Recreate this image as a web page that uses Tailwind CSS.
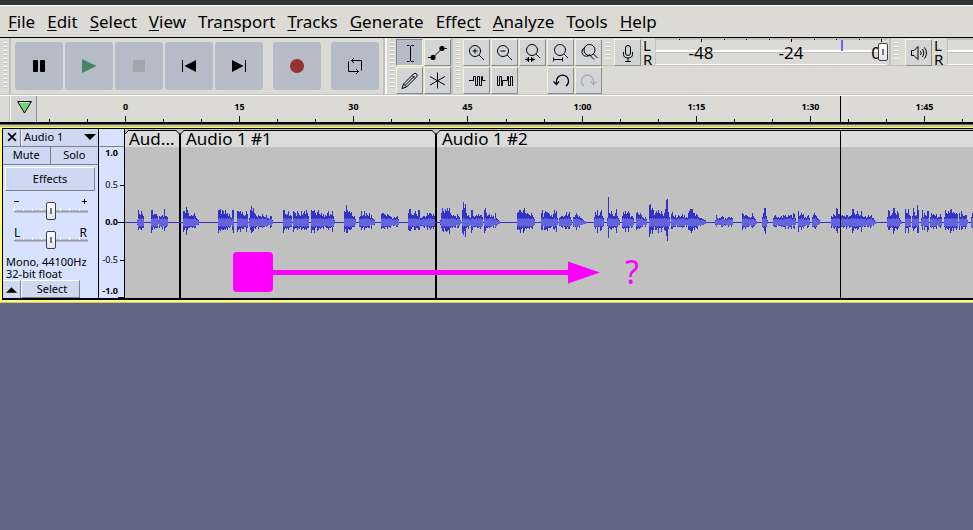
<!DOCTYPE html>
<html lang="en">
<head>
    <meta charset="UTF-8">
    <meta name="viewport" content="width=device-width, initial-scale=1">
    <title>Audio Editor</title>
    <script src="https://cdn.jsdelivr.net/npm/@tailwindcss/browser@4"></script>
</head>
<body class="min-h-screen bg-[#626685] font-['Noto_Sans',sans-serif] text-black overflow-x-hidden">
    <div class="h-[5px] bg-[#30353a]"></div>

    <nav class="flex items-center gap-3 h-8 pl-2 bg-[#dbdad5] border-t border-white text-[17px] leading-6 whitespace-nowrap" aria-label="Main menu">
        <button><span class="underline underline-offset-2 decoration-1">F</span>ile</button>
        <button><span class="underline underline-offset-2 decoration-1">E</span>dit</button>
        <button><span class="underline underline-offset-2 decoration-1">S</span>elect</button>
        <button><span class="underline underline-offset-2 decoration-1">V</span>iew</button>
        <button>Tra<span class="underline underline-offset-2 decoration-1">n</span>sport</button>
        <button><span class="underline underline-offset-2 decoration-1">T</span>racks</button>
        <button><span class="underline underline-offset-2 decoration-1">G</span>enerate</button>
        <button>Effe<span class="underline underline-offset-2 decoration-1">c</span>t</button>
        <button><span class="underline underline-offset-2 decoration-1">A</span>nalyze</button>
        <button>T<span class="underline underline-offset-2 decoration-1">o</span>ols</button>
        <button><span class="underline underline-offset-2 decoration-1">H</span>elp</button>
    </nav>

    <!-- Toolbars -->
    <div class="flex h-[58px] bg-[#dbdad5] border-t border-black border-b border-b-[#c0c0c0] overflow-hidden">
        <div class="w-[11px] shrink-0 flex justify-center pt-1 border-r-2 border-[#c0c0c0]">
            <div class="w-1 h-12 bg-[repeating-linear-gradient(to_bottom,#fff_0px_1px,#c0c0c0_1px_2px,#dbdad5_2px_4px)]"></div>
        </div>
        <div class="flex shrink-0 gap-[2px] pl-1 pr-1 pt-1 border-r-2 border-[#c0c0c0]">
            <button class="size-12 rounded-[3px] bg-[#b5bbc7]" aria-label="Pause">
                <svg class="size-12" viewBox="0 0 48 48"><rect x="18" y="18" width="5" height="12" rx="1"/><rect x="25" y="18" width="5" height="12" rx="1"/></svg>
            </button>
            <button class="size-12 rounded-[3px] bg-[#b5bbc7]" aria-label="Play">
                <svg class="size-12" viewBox="0 0 48 48"><path d="M17 17L31.500 24L17 31Z" fill="#468466"/></svg>
            </button>
            <button class="size-12 rounded-[3px] bg-[#b5bbc7]" aria-label="Stop">
                <svg class="size-12" viewBox="0 0 48 48"><rect x="18" y="18" width="12" height="12" fill="#a2a6ad"/></svg>
            </button>
            <button class="size-12 rounded-[3px] bg-[#b5bbc7]" aria-label="Skip to start">
                <svg class="size-12" viewBox="0 0 48 48"><path d="M17 18h1v12h-1zM31 18v12L19.500 24Z"/></svg>
            </button>
            <button class="size-12 rounded-[3px] bg-[#b5bbc7]" aria-label="Skip to end">
                <svg class="size-12" viewBox="0 0 48 48"><path d="M30 18h1v12h-1zM17 18v12L28.500 24Z"/></svg>
            </button>
            <button class="size-12 ml-2 rounded-[3px] bg-[#b5bbc7]" aria-label="Record">
                <svg class="size-12" viewBox="0 0 48 48"><circle cx="24" cy="24" r="7" fill="#963232"/></svg>
            </button>
            <button class="size-12 ml-2 rounded-[3px] bg-[#b5bbc7]" aria-label="Loop">
                <svg class="size-12" viewBox="0 0 48 48" fill="none" stroke="#000"><path d="M20.500 18.500H30.500V28.500M23 16l-2.500 2.500L23 21M27.500 29.500H17.500V19.500M25 27l2.500 2.500L25 32"/></svg>
            </button>
        </div>
        <div class="w-[11px] shrink-0 flex justify-center pt-1 border-l-2 border-white">
            <div class="w-1 h-12 bg-[repeating-linear-gradient(to_bottom,#fff_0px_1px,#c0c0c0_1px_2px,#dbdad5_2px_4px)]"></div>
        </div>
        <div class="grid grid-cols-[27px_27px] grid-rows-[27px_27px] gap-px pt-px shrink-0">
            <button class="bg-[#b5bbc7] border border-t-[#848892] border-l-[#848892] border-r-[#f7f3cf] border-b-[#f7f3cf]" aria-label="Selection tool">
                <svg class="size-[25px]" viewBox="0 0 25 25" fill="none" stroke="#000"><path d="M10 5.500h2.500l1 1l1-1H17M13.500 6v15M10 21.500h2.500l1-1l1 1H17"/></svg>
            </button>
            <button class="bg-[#d3d4d6] border border-t-[#f7f3cf] border-l-[#f7f3cf] border-r-[#898c91] border-b-[#898c91]" aria-label="Envelope tool">
                <svg class="size-[25px]" viewBox="0 0 25 25" stroke="#000"><path fill="none" d="M3 17.500H8L17 8.500H22"/><circle cx="8" cy="17.500" r="2.200"/><circle cx="17" cy="8.500" r="2.200"/></svg>
            </button>
            <button class="bg-[#d3d4d6] border border-t-[#f7f3cf] border-l-[#f7f3cf] border-r-[#898c91] border-b-[#898c91]" aria-label="Draw tool">
                <svg class="size-[25px]" viewBox="0 0 25 25" fill="none" stroke="#000"><path d="M5 20.500L6.500 16L16.500 6Q18 4.500 19.500 6Q21 7.500 19.500 9L9.500 19ZM15 7.500L18 10.500M6.500 16L9.500 19M8 17.500L17.500 8"/></svg>
            </button>
            <button class="bg-[#d3d4d6] border border-t-[#f7f3cf] border-l-[#f7f3cf] border-r-[#898c91] border-b-[#898c91]" aria-label="Multi tool">
                <svg class="size-[25px]" viewBox="0 0 25 25" fill="none" stroke="#000"><path d="M12.500 4.500V20.500M5 8.500L20 17M5 17L20 8.500"/></svg>
            </button>
        </div>
        <div class="w-[12px] shrink-0 flex justify-center pt-1 border-l-2 border-[#c0c0c0]">
            <div class="w-1 h-12 bg-[repeating-linear-gradient(to_bottom,#fff_0px_1px,#c0c0c0_1px_2px,#dbdad5_2px_4px)]"></div>
        </div>
        <div class="grid grid-cols-[27px_27px_27px_27px_27px] grid-rows-[27px_27px] gap-px pt-px shrink-0">
            <button class="bg-[#d3d4d6] border border-t-[#f7f3cf] border-l-[#f7f3cf] border-r-[#898c91] border-b-[#898c91]" aria-label="Zoom in">
                <svg class="size-[25px]" viewBox="0 0 25 25" fill="none" stroke="#000"><circle cx="11" cy="11" r="5.500"/><path d="M15 15l5 5M8.500 11h5M11 8.500v5"/></svg>
            </button>
            <button class="bg-[#d3d4d6] border border-t-[#f7f3cf] border-l-[#f7f3cf] border-r-[#898c91] border-b-[#898c91]" aria-label="Zoom out">
                <svg class="size-[25px]" viewBox="0 0 25 25" fill="none" stroke="#000"><circle cx="11" cy="11" r="5.500"/><path d="M15 15l5 5M8.500 11h5"/></svg>
            </button>
            <button class="bg-[#d3d4d6] border border-t-[#f7f3cf] border-l-[#f7f3cf] border-r-[#898c91] border-b-[#898c91]" aria-label="Fit selection to width">
                <svg class="size-[25px]" viewBox="0 0 25 25" fill="none" stroke="#000"><circle cx="12" cy="10" r="5.500"/><path d="M16 14l4 4M5 19.500h10M8.500 17v5M11.500 17v5M6.500 18l2 1.500l-2 1.500M13.500 18l-2 1.500l2 1.500"/></svg>
            </button>
            <button class="bg-[#d3d4d6] border border-t-[#f7f3cf] border-l-[#f7f3cf] border-r-[#898c91] border-b-[#898c91]" aria-label="Fit project to width">
                <svg class="size-[25px]" viewBox="0 0 25 25" fill="none" stroke="#000"><circle cx="12" cy="10" r="5.500"/><path d="M16 14l4 4M5 19.500h10M5.500 17.500v4M14.500 17.500v4"/></svg>
            </button>
            <button class="bg-[#d3d4d6] border border-t-[#f7f3cf] border-l-[#f7f3cf] border-r-[#898c91] border-b-[#898c91]" aria-label="Zoom toggle">
                <svg class="size-[25px]" viewBox="0 0 25 25" fill="none" stroke="#000"><circle cx="13.500" cy="10" r="5.500"/><path d="M17.500 14l4 4M9 7.500a4.500 4.500 0 1 0 5 7M14 15.500l4 4"/></svg>
            </button>
            <button class="bg-[#d3d4d6] border border-t-[#f7f3cf] border-l-[#f7f3cf] border-r-[#898c91] border-b-[#898c91]" aria-label="Trim audio">
                <svg class="size-[25px]" viewBox="0 0 25 25" fill="none" stroke="#000"><path d="M5 12.500h4.500V8.500h2v9h2v-9h2v9h2v-9h1v4h3"/></svg>
            </button>
            <button class="bg-[#d3d4d6] border border-t-[#f7f3cf] border-l-[#f7f3cf] border-r-[#898c91] border-b-[#898c91]" aria-label="Silence audio">
                <svg class="size-[25px]" viewBox="0 0 25 25" fill="none" stroke="#000"><path d="M5.500 8v9.500h2v-9h2v9h1v-5h5v-4h1v9h2v-9h2V18"/></svg>
            </button>
            <span></span>
            <button class="bg-[#d3d4d6] border border-t-[#f7f3cf] border-l-[#f7f3cf] border-r-[#898c91] border-b-[#898c91]" aria-label="Undo">
                <svg class="size-[25px]" viewBox="0 0 25 25" fill="none" stroke="#000" stroke-width="1.200"><path d="M8.500 16.500V13a6 6 0 1 1 9.500 5M5.500 13.500L8.500 16.500l2.500-3"/></svg>
            </button>
            <button class="bg-[#d3d4d6] border border-t-[#f7f3cf] border-l-[#f7f3cf] border-r-[#898c91] border-b-[#898c91]" aria-label="Redo" disabled>
                <svg class="size-[25px]" viewBox="0 0 25 25" fill="none" stroke="#a9adb3" stroke-width="1.200"><path d="M17.500 16.500V13a6 6 0 1 0-9.500 5M20.500 13.500L17.500 16.500l-2.500-3"/></svg>
            </button>
        </div>
        <div class="flex flex-1 h-[28px] border-b border-[#c0c0c0]">
            <div class="w-3 shrink-0 flex justify-center pt-1">
                <div class="w-1 h-5 bg-[repeating-linear-gradient(to_bottom,#fff_0px_1px,#c0c0c0_1px_2px,#dbdad5_2px_4px)]"></div>
            </div>
            <button class="mt-px size-[27px] shrink-0 bg-[#d3d4d6] border border-t-[#f7f3cf] border-l-[#f7f3cf] border-r-[#898c91] border-b-[#898c91]" aria-label="Record meter">
                <svg class="size-[25px]" viewBox="0 0 25 25" fill="none" stroke="#000"><rect x="10.500" y="5.500" width="5" height="10" rx="2.500"/><path d="M8.500 12v2q0 4 4.500 4t4.500-4v-2M13 18v3M10 21.500h6"/></svg>
            </button>
            <div class="w-[14px] shrink-0 pl-[2px] text-[15px] leading-[14px]"><p>L</p><p>R</p></div>
            <div class="relative w-[232px] shrink-0 text-[17px]">
                <div class="h-[14px] border-t-2 border-b-2 border-l border-t-[#c0c0c0] border-b-white border-l-[#c0c0c0]"></div>
                <div class="h-[13px] border-b border-l border-b-white border-l-[#c0c0c0] border-t border-t-[#c0c0c0]"></div>
                <svg class="absolute inset-0 w-full h-7" aria-hidden="true">
                    <path d="M24.500 1v1M46.500 1v3M69.500 1v1M91.500 1v1M114.500 1v1M136.500 1v3M159.500 1v1M181.500 1v1M204.500 1v1M226.500 1v3" stroke="#000"/>
                    <rect x="186" y="2" width="2" height="11" fill="#6464ff"/>
                    <text x="46" y="21" text-anchor="middle">-48</text>
                    <text x="136" y="21" text-anchor="middle">-24</text>
                    <text x="221" y="21" text-anchor="middle">0</text>
                </svg>
                <input type="range" value="100" aria-label="Recording volume" class="absolute left-0 top-[5px] w-[233px] h-[18px] appearance-none bg-transparent [&::-webkit-slider-thumb]:appearance-none [&::-webkit-slider-thumb]:w-[10px] [&::-webkit-slider-thumb]:h-[18px] [&::-webkit-slider-thumb]:rounded-[2px] [&::-webkit-slider-thumb]:border [&::-webkit-slider-thumb]:border-[#3c3f48] [&::-webkit-slider-thumb]:bg-[linear-gradient(#737780,#737780),linear-gradient(#fff,#dfe2e8)] [&::-webkit-slider-thumb]:bg-[length:2px_6px,100%_100%] [&::-webkit-slider-thumb]:bg-center [&::-webkit-slider-thumb]:bg-no-repeat">
            </div>
            <div class="w-[18px] shrink-0 flex pl-[2px]">
                <div class="w-[2px] mr-[3px] bg-[#c0c0c0]"></div>
                <div class="w-1 h-5 mt-1 bg-[repeating-linear-gradient(to_bottom,#fff_0px_1px,#c0c0c0_1px_2px,#dbdad5_2px_4px)]"></div>
            </div>
            <button class="mt-px size-[27px] shrink-0 bg-[#d3d4d6] border border-t-[#f7f3cf] border-l-[#f7f3cf] border-r-[#898c91] border-b-[#898c91]" aria-label="Playback meter">
                <svg class="size-[25px]" viewBox="0 0 25 25" fill="none" stroke="#000"><path d="M5.500 10.500h2.500l4-4v13l-4-4H5.500ZM14.500 11q1.500 2 0 4M16.500 9q3 4 0 8M18.500 7.500q4 5.500 0 11"/></svg>
            </button>
            <div class="w-[15px] shrink-0 pl-[2px] text-[15px] leading-[14px]"><p>L</p><p>R</p></div>
            <div class="flex-1">
                <div class="h-[14px] border-t-2 border-b-2 border-l border-t-[#c0c0c0] border-b-white border-l-[#c0c0c0]"></div>
                <div class="h-[13px] border-b border-l border-t border-b-white border-l-[#c0c0c0] border-t-[#c0c0c0]"></div>
            </div>
        </div>
    </div>

    <!-- Timeline -->
    <div class="flex h-[27px] bg-[#dbdad5] border-t border-white">
        <div class="w-[10px] shrink-0 border-r border-[#c0c0c0]"></div>
        <button class="w-[27px] shrink-0 bg-[#d3d4d6] border-l border-r border-l-[#f7f3cf] border-r-[#898c91]" aria-label="Timeline options">
            <svg class="w-[25px] h-[26px]" viewBox="0 0 25 26"><path d="M6.500 5.500H20.500L13.500 17Z" fill="#74d274" stroke="#000"/><path d="M8.500 6.500H18.500" stroke="#c8f0c8"/></svg>
        </button>
        <svg id="timeline" class="flex-1 h-[26px] text-[9px] font-bold overflow-hidden"></svg>
    </div>
    <div class="h-[5px] bg-[#626685] border-t-2 border-black border-b-2 border-b-[#c9c87f]"></div>

    <!-- Track -->
    <div class="relative flex h-[175px] bg-black border-t border-b-2 border-l-2 border-[#fffc7a] pt-px pl-px pb-[2px] overflow-hidden">
        <section class="w-[95px] shrink-0 flex flex-col bg-[#d6e2ff] text-[11px] leading-4" aria-label="Track controls">
            <div class="flex h-[18px] border-b border-[#7f7f7f] bg-[#cdd9f2]">
                <button class="w-[18px] flex items-center justify-center border-r border-[#7f7f7f]" aria-label="Close track">
                    <svg class="size-[10px]" viewBox="0 0 9 9" stroke="#000" stroke-width="1.500"><path d="M1 1L8 8M8 1L1 8"/></svg>
                </button>
                <button class="flex-1 flex items-center justify-between pl-[2px] pr-[2px] border-l border-white">Audio 1
                    <svg class="w-3 h-[6px]" viewBox="0 0 12 6"><path d="M0 0H12L6 6Z"/></svg>
                </button>
            </div>
            <div class="grid grid-cols-2 h-[18px] border-b border-[#7f7f7f] bg-[#cdd9f2]">
                <button class="border-r border-[#7f7f7f]">Mute</button>
                <button>Solo</button>
            </div>
            <button class="ml-[2px] mr-[3px] mt-[2px] mb-[2px] h-6 bg-[#cdd9f2] border border-t-white border-l-white border-r-[#7f7f7f] border-b-[#7f7f7f]">Effects</button>
            <div class="relative h-[30px] mx-[10px]">
                <svg class="absolute inset-0 w-full h-full" aria-hidden="true"><path d="M1 18.500H77" stroke="#999" stroke-width="2"/><path d="M1.500 14v4M10.500 15v3M19.500 15v3M28.500 15v3M47.500 15v3M56.500 15v3M66.500 15v3M75.500 14v4" stroke="#fff"/><path d="M1 8.500h5M69 8.500h5M71.500 6v5" stroke="#000"/></svg>
                <input type="range" value="50" aria-label="Gain" class="absolute left-px top-[9px] w-[74px] h-[18px] appearance-none bg-transparent [&::-webkit-slider-thumb]:appearance-none [&::-webkit-slider-thumb]:w-[10px] [&::-webkit-slider-thumb]:h-[18px] [&::-webkit-slider-thumb]:rounded-[2px] [&::-webkit-slider-thumb]:border [&::-webkit-slider-thumb]:border-[#3c3f48] [&::-webkit-slider-thumb]:bg-[linear-gradient(#737780,#737780),linear-gradient(#fff,#dfe2e8)] [&::-webkit-slider-thumb]:bg-[length:2px_6px,100%_100%] [&::-webkit-slider-thumb]:bg-center [&::-webkit-slider-thumb]:bg-no-repeat">
            </div>
            <div class="relative h-[30px] mx-[10px]">
                <svg class="absolute inset-0 w-full h-full" aria-hidden="true"><path d="M1 18.500H77" stroke="#999" stroke-width="2"/><path d="M1.500 14v4M10.500 15v3M19.500 15v3M28.500 15v3M47.500 15v3M56.500 15v3M66.500 15v3M75.500 14v4" stroke="#fff"/></svg>
                <div class="absolute inset-x-0 top-[3px] flex justify-between pl-px pr-px text-xs leading-4"><span>L</span><span>R</span></div>
                <input type="range" value="50" aria-label="Pan" class="absolute left-px top-[9px] w-[74px] h-[18px] appearance-none bg-transparent [&::-webkit-slider-thumb]:appearance-none [&::-webkit-slider-thumb]:w-[10px] [&::-webkit-slider-thumb]:h-[18px] [&::-webkit-slider-thumb]:rounded-[2px] [&::-webkit-slider-thumb]:border [&::-webkit-slider-thumb]:border-[#3c3f48] [&::-webkit-slider-thumb]:bg-[linear-gradient(#737780,#737780),linear-gradient(#fff,#dfe2e8)] [&::-webkit-slider-thumb]:bg-[length:2px_6px,100%_100%] [&::-webkit-slider-thumb]:bg-center [&::-webkit-slider-thumb]:bg-no-repeat">
            </div>
            <p class="pl-[3px] pt-1 leading-3 whitespace-nowrap">Mono, 44100Hz<br>32-bit float</p>
            <div class="flex h-[18px] mt-auto">
                <button class="w-[18px] flex items-center justify-center bg-[#cdd9f2] border-t border-r border-t-white border-r-[#7f7f7f]" aria-label="Collapse track">
                    <svg class="w-[11px] h-[6px]" viewBox="0 0 12 6"><path d="M0 6H12L6 0Z"/></svg>
                </button>
                <button class="w-[59px] pl-[3px] bg-[#cdd9f2] border border-t-white border-l-white border-r-[#7f7f7f] border-b-[#7f7f7f]">Select</button>
            </div>
        </section>
        <svg class="w-[25px] shrink-0 ml-px bg-[#d6e2ff] text-[9px]" aria-label="Amplitude scale">
            <path d="M0 17.500H25" stroke="#7f7f7f"/>
            <path d="M21 56.500H25M19 93.500H25M21 131.500H25M19 168.500H25" stroke="#000"/>
            <g text-anchor="end">
                <text x="19" y="27" font-weight="bold">1.0</text>
                <text x="19" y="59">0.5</text>
                <text x="19" y="96" font-weight="bold">0.0</text>
                <text x="19" y="134">-0.5</text>
                <text x="19" y="165" font-weight="bold">-1.0</text>
            </g>
        </svg>
        <div class="relative flex flex-1 min-w-0 ml-px gap-[2px] border-t border-[#c0c0c0] bg-black text-[17px] leading-4">
            <article class="w-[54px] shrink-0 bg-[#c0c0c0]"><h2 class="h-[17px] pl-1 bg-[#dbdbdb] border-t border-black whitespace-nowrap">Aud...</h2></article>
            <article class="w-[254px] shrink-0 bg-[#c0c0c0]"><h2 class="h-[17px] pl-[5px] bg-[#dbdbdb] border-t border-black whitespace-nowrap">Audio 1 #1</h2></article>
            <article class="flex-1 bg-[#c0c0c0]"><h2 class="h-[17px] pl-[5px] bg-[#dbdbdb] border-t border-black whitespace-nowrap">Audio 1 #2</h2></article>
            <svg id="wave" class="absolute inset-0 w-full h-full" shape-rendering="crispEdges" aria-label="Waveform"></svg>
            <svg class="absolute inset-0 w-full h-full" aria-hidden="true">
                <!-- notches where clip corners meet -->
                <path d="M51 0H59L55 4Z M307 0H315L311 4Z M0 0H4L0 4Z" fill="#c0c0c0"/>
                <path d="M51 0.500L55 4.500L59 0.500M307 0.500L311 4.500L315 0.500M0 4L4 0" fill="none" stroke="#000"/>
                <rect x="108" y="122" width="40" height="40" rx="4" fill="#ff00ff"/>
                <path d="M148 142.500H444" stroke="#ff00ff" stroke-width="5"/>
                <path d="M443 131.500L475 142.500L443 153.500Z" fill="#ff00ff"/>
            </svg>
            <span class="absolute left-[500px] top-[122px] text-[32px] leading-10 text-[#ff00ff]">?</span>
            <div class="absolute left-[715px] inset-y-0 w-px bg-black"></div>
        </div>
    </div>
    <div class="h-px bg-[#c9c87f]"></div>

    <script>
        // Timeline: 38px is five seconds, zero sits 88px from the left edge
        const timeline = document.getElementById('timeline');
        let marks = '';
        for (let i = -2; i < 24; i++) {
            const x = 88 + Math.round(i * 38.05);
            const major = i >= 0 && i % 3 === 0;
            marks += `<path d="M${x + 0.5} ${major ? 20 : 23}V26" stroke="#000"/>`;
            if (major) {
                const sec = i * 5;
                const label = sec < 60 ? sec : Math.floor(sec / 60) + ':' + String(sec % 60).padStart(2, '0');
                marks += `<text x="${x + 0.5}" y="14" text-anchor="middle">${label}</text>`;
            }
        }
        marks += '<path d="M803.5 0V26" stroke="#000"/>';
        timeline.innerHTML = marks;

        // Peak heights in base 36, one character per pixel, keyed by start position
        const bursts = [
            [12, '2c87b86'], [26, 'cc788862'], [34, '65675d665'],
            [58, 'bb9fc96676796432'], [93, 'ccd8cb8c896854cc'],
            [112, 'bbab8a767b8'], [124, '4cgbe9865766586557443662'],
            [158, 'cc878b676'], [168, 'ba96b976b79b8c96'], [186, 'cbbc97ac879685769b687b62'],
            [219, 'bahcab9a6563'], [234, '56b67b6976947432'], [256, '899876876653454563'],
            [283, '9dd8779b86cc4'], [296, '45665697998686'],
            [315, '29eb9dbebe97676648652'], [337, 'ckei96754'], [346, 'cc6567686775'], [359, 'ce96785756394321'],
            [392, '9acca9ce9898769753'], [416, '9c59baa986758c9b4'], [434, '4566567a68a52'], [448, '5579756443211'],
            [469, '5a7c67ac64'], [482, '4p98b8669d642'], [497, '6a8b89b95664'], [511, '9a879754353'],
            [524, 'hicec79b9c98b869dmna5'], [546, '8a657457656857454'],
            [563, '9bddd9968754443322'], [590, '2743445652'], [600, '43455454'],
            [617, '986776554596431'], [637, '59ee62'], [648, '46754545647675576774984'],
            [673, 'b67978454674'], [687, '57976432'],
            [706, '65876ed88967665'], [721, '775667dd978b867b65564575674421'],
            [762, '5cb679ee97b9421'], [780, 'd99d76'], [787, '6ea67hc'], [796, '4c5976bb'],
            [805, '597876845585'], [819, '5c98b9cd9a9898'], [834, '95b866772'], [846, '59']
        ];
        const mid = 92;
        let outer = '';
        let inner = '';
        bursts.forEach(([start, peaks]) => {
            [...peaks].forEach((c, i) => {
                const up = parseInt(c, 36);
                const down = Math.max(1, Math.round(up * (i % 3 ? 0.6 : 0.8)));
                const rms = Math.min(3 + (i % 2), Math.round(up * 0.5));
                outer += `M${start + i} ${mid - up}h1V${mid + 1 + down}h-1z`;
                inner += `M${start + i} ${mid - rms}h1V${mid + 1 + rms}h-1z`;
            });
        });
        document.getElementById('wave').innerHTML =
            `<rect x="0" y="${mid}" width="100%" height="1" fill="#3232c8"/>` +
            `<path d="${outer}" fill="#3232c8"/><path d="${inner}" fill="#6464dc"/>`;
    </script>
</body>
</html>
